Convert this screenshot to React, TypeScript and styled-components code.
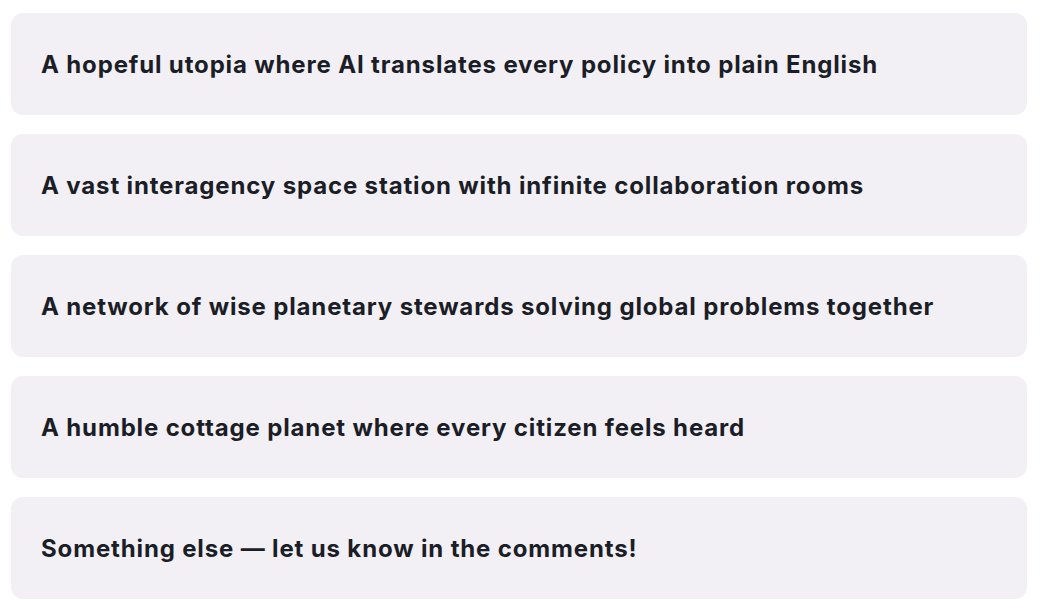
import styled, { createGlobalStyle } from "styled-components";

const GlobalStyle = createGlobalStyle`
  html, body {
    margin: 0;
    padding: 0;
    background: #ffffff;
  }
  body {
    font-family: Inter, "Noto Sans", "Liberation Sans", sans-serif;
    -webkit-font-smoothing: antialiased;
  }
`;

const options = [
  "A hopeful utopia where AI translates every policy into plain English",
  "A vast interagency space station with infinite collaboration rooms",
  "A network of wise planetary stewards solving global problems together",
  "A humble cottage planet where every citizen feels heard",
  "Something else — let us know in the comments!",
];

export default function App() {
  return (
    <>
      <GlobalStyle />
      <OptionList>
        {options.map((label) => (
          <OptionCard key={label}>
            <OptionLabel>{label}</OptionLabel>
          </OptionCard>
        ))}
      </OptionList>
    </>
  );
}

const OptionList = styled.div`
  display: flex;
  flex-direction: column;
  gap: 19px;
  padding: 13px 13px 0 11px;
`;

const OptionCard = styled.div`
  display: flex;
  align-items: center;
  height: 102px;
  box-sizing: border-box;
  padding: 3px 30px 0;
  background: #f2f0f5;
  border-radius: 12px;
`;

const OptionLabel = styled.span`
  font-size: 24px;
  font-weight: 700;
  letter-spacing: 0.85px;
  color: #1b1e27;
  line-height: 1.2;
`;
